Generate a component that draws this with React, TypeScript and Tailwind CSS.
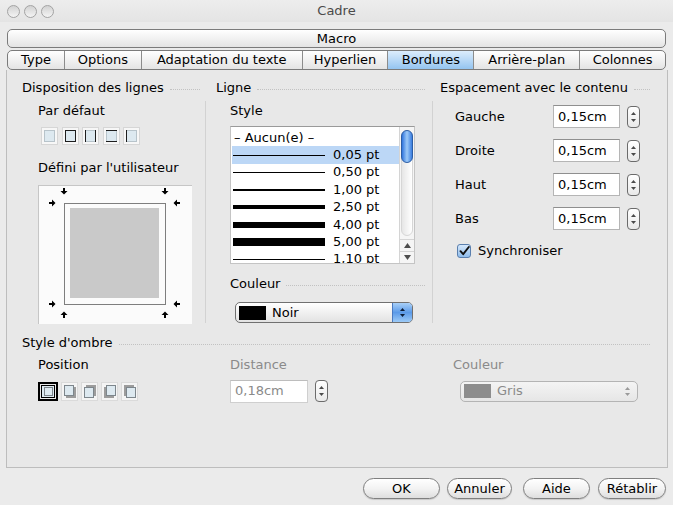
import React from "react";

const sans = "font-['DejaVu_Sans',sans-serif]";

const tabs: [string, number][] = [
  ["Type", 57],
  ["Options", 77],
  ["Adaptation du texte", 161],
  ["Hyperlien", 86],
  ["Bordures", 86],
  ["Arrière-plan", 106],
  ["Colonnes", 86],
];

const styleRows = [
  { label: "0,05 pt", h: 1, selected: true },
  { label: "0,50 pt", h: 1 },
  { label: "1,00 pt", h: 2 },
  { label: "2,50 pt", h: 4 },
  { label: "4,00 pt", h: 6 },
  { label: "5,00 pt", h: 8 },
  { label: "1,10 pt", h: 1 },
];

function GroupTitle({ label, disabled }: { label: string; disabled?: boolean }) {
  return (
    <div className="flex items-center h-4">
      <span className={`shrink-0 ${disabled ? "text-[#8a8a8a]" : ""}`}>{label}</span>
      <div className="ml-[6px] flex-1 mt-[2px] border-t border-dotted border-[#c2c2c2]" />
    </div>
  );
}

function Spinner({ disabled }: { disabled?: boolean }) {
  const c = disabled ? "#9a9a9a" : "#4a4a4a";
  return (
    <div
      className={`w-[13px] h-[22px] rounded-[4px] border ${
        disabled ? "border-[#9f9f9f]" : "border-[#6b6b6b]"
      } bg-linear-to-b from-white to-[#e9e9e9] flex flex-col items-center justify-center gap-[4px]`}
    >
      <svg width="5" height="3" viewBox="0 0 5 3">
        <path d="M2.5 0L5 3H0z" fill={c} />
      </svg>
      <svg width="5" height="3" viewBox="0 0 5 3">
        <path d="M0 0H5L2.5 3z" fill={c} />
      </svg>
    </div>
  );
}

function NumField({ value, disabled }: { value: string; disabled?: boolean }) {
  return (
    <div
      className={`h-[23px] flex items-center pl-[4px] bg-white border border-[#b5b5b5] border-t-[#8f8f8f] ${
        disabled ? "text-[#8a8a8a] bg-[#f7f7f7] border-[#cfcfcf] border-t-[#bdbdbd]" : ""
      }`}
    >
      {value}
    </div>
  );
}

function PresetIcon({ sides }: { sides: string }) {
  return (
    <svg width="17" height="18" viewBox="0 0 17 18">
      <rect x="0.5" y="0.5" width="16" height="17" fill="#f7f7f7" stroke="#d6d6d6" />
      <rect x="3.5" y="3.5" width="10" height="11" fill="#dde9f0" stroke="#b7c3ca" />
      {sides.includes("t") && <line x1="3" y1="3.5" x2="14" y2="3.5" stroke="#1e1e1e" />}
      {sides.includes("b") && <line x1="3" y1="14.5" x2="14" y2="14.5" stroke="#1e1e1e" />}
      {sides.includes("l") && <line x1="3.5" y1="3" x2="3.5" y2="15" stroke="#1e1e1e" />}
      {sides.includes("r") && <line x1="13.5" y1="3" x2="13.5" y2="15" stroke="#1e1e1e" />}
    </svg>
  );
}

function ShadowIcon({ dx, dy }: { dx: number; dy: number }) {
  const x = 4 - (dx < 0 ? dx : 0);
  const y = 4 - (dy < 0 ? dy : 0);
  return (
    <svg width="17" height="19" viewBox="0 0 17 19">
      <rect x="0.5" y="0.5" width="16" height="18" fill="#f4f4f4" stroke="#dadada" />
      <rect x={x + dx - 1} y={y + dy - 1} width="10" height="11" fill="#9c9c9c" />
      <rect x={x - 1 + 0.5} y={y - 1 + 0.5} width="9" height="10" fill="#dde9f0" stroke="#7d868c" />
    </svg>
  );
}

function Arrow({ x, y, rot }: { x: number; y: number; rot: number }) {
  return (
    <polygon
      points="-1,-4 1,-4 1,-1 3.5,-1 0,2.5 -3.5,-1 -1,-1"
      fill="#000"
      transform={`translate(${x} ${y}) rotate(${rot})`}
    />
  );
}

function BorderPreview() {
  return (
    <div className="w-[154px] h-[139px] bg-[#fbfbfb] border-t border-l border-[#c6c6c6]">
      <svg width="153" height="138" viewBox="0 0 153 138">
        <rect x="31" y="22" width="89" height="90" fill="#c9c9c9" />
        <rect
          x="25.5"
          y="17.5"
          width="101"
          height="101"
          fill="none"
          stroke="#000"
          strokeDasharray="1 1"
        />
        <Arrow x={25} y={6} rot={0} />
        <Arrow x={126} y={6} rot={0} />
        <Arrow x={14} y={17} rot={-90} />
        <Arrow x={14} y={118} rot={-90} />
        <Arrow x={137} y={17} rot={90} />
        <Arrow x={137} y={118} rot={90} />
        <Arrow x={25} y={128} rot={180} />
        <Arrow x={126} y={128} rot={180} />
      </svg>
    </div>
  );
}

function StyleList() {
  return (
    <div className="w-[185px] h-[138px] bg-white border border-[#c4c4c4] border-t-[#9a9a9a] flex overflow-hidden">
      <div className="flex-1 pt-[2px] pl-px">
        <div className="h-[17.4px] flex items-center pl-[2px]">– Aucun(e) –</div>
        {styleRows.map((r) => (
          <div
            key={r.label}
            className={`h-[17.4px] flex items-center ${r.selected ? "bg-[#bcd7f6]" : ""}`}
          >
            <div className="ml-[1px] w-[92px] bg-black" style={{ height: r.h }} />
            <span className="ml-[8px]">{r.label}</span>
          </div>
        ))}
      </div>
      <div className="w-[15px] border-l border-[#d4d4d4] bg-[#f5f5f5] flex flex-col items-center">
        <div className="mt-[3px] w-[12px] h-[106px] rounded-full border border-[#d6d6d6] bg-linear-to-r from-[#e6e6e6] to-white">
          <div className="-m-px w-[12px] h-[33px] rounded-full border border-[#2c5ea6] bg-linear-to-r from-[#2f74dc] via-[#9cc9f7] to-[#3a7ddf]" />
        </div>
        <div className="mt-[3px] w-full border-t border-[#d4d4d4] h-[12px] flex items-center justify-center">
          <svg width="7" height="5" viewBox="0 0 7 5">
            <path d="M3.5 0L7 5H0z" fill="#4d4d4d" />
          </svg>
        </div>
        <div className="w-full border-t border-[#d4d4d4] h-[12px] flex items-center justify-center">
          <svg width="7" height="5" viewBox="0 0 7 5">
            <path d="M0 0H7L3.5 5z" fill="#4d4d4d" />
          </svg>
        </div>
      </div>
    </div>
  );
}

function ColorSelect({
  swatch,
  label,
  disabled,
}: {
  swatch: string;
  label: string;
  disabled?: boolean;
}) {
  return (
    <div
      className={`w-[178px] h-[21px] rounded-[5px] border flex items-center overflow-hidden ${
        disabled
          ? "border-[#b4b4b4] bg-linear-to-b from-[#f4f4f4] to-[#e6e6e6] text-[#8a8a8a]"
          : "border-[#707070] bg-linear-to-b from-white to-[#e2e2e2]"
      }`}
    >
      <div className="ml-[3px] w-[27px] h-[14px]" style={{ background: swatch }} />
      <span className="ml-[6px] flex-1">{label}</span>
      <div
        className={`w-[20px] h-full flex flex-col items-center justify-center gap-[3px] ${
          disabled ? "" : "border-l border-[#4a79c0] bg-linear-to-b from-[#a9d0f8] via-[#5b9ae8] to-[#9ccaf7]"
        }`}
      >
        <svg width="5" height="3" viewBox="0 0 5 3">
          <path d="M2.5 0L5 3H0z" fill={disabled ? "#9a9a9a" : "#0d1f3a"} />
        </svg>
        <svg width="5" height="3" viewBox="0 0 5 3">
          <path d="M0 0H5L2.5 3z" fill={disabled ? "#9a9a9a" : "#0d1f3a"} />
        </svg>
      </div>
    </div>
  );
}

function Button({ label, w }: { label: string; w: string }) {
  return (
    <div
      className={`${w} h-[21px] rounded-full border border-[#7f7f7f] bg-linear-to-b from-white via-[#f3f3f3] to-[#dedede] shadow-[0_1px_1px_rgba(0,0,0,0.15)] flex items-center justify-center`}
    >
      {label}
    </div>
  );
}

export default function App() {
  return (
    <div
      className={`w-[673px] h-[505px] bg-[#ebebeb] ${sans} text-[13px] leading-4 text-black flex flex-col overflow-hidden`}
    >
      {/* Title bar */}
      <div className="h-[22px] grid grid-cols-[1fr_auto_1fr] items-center bg-linear-to-b from-[#ededed] to-[#e4e4e4]">
        <div className="flex gap-[4px] ml-[7px]">
          {[0, 1, 2].map((i) => (
            <div
              key={i}
              className="w-[13px] h-[13px] rounded-full border border-[#a3a3a3] bg-linear-to-b from-[#d2d2d2] to-[#f4f4f4]"
            />
          ))}
        </div>
        <span className="text-[#4a4a4a]">Cadre</span>
        <div />
      </div>

      {/* Macro + tabs */}
      <div className="px-[7px] pt-[7px]">
        <div className="h-[19px] rounded-[5px] border border-[#7b7b7b] bg-linear-to-b from-white to-[#e4e4e4] flex items-center justify-center">
          Macro
        </div>
        <div className="mt-[2px] h-[20px] rounded-[5px] border border-[#7b7b7b] bg-linear-to-b from-white to-[#e4e4e4] flex overflow-hidden">
          {tabs.map(([t, w], i) => (
            <div
              key={t}
              style={{ width: i === 0 ? w - 1 : w }}
              className={`h-full flex items-center justify-center ${
                i > 0 ? "border-l border-[#8c8c8c]" : ""
              } ${t === "Bordures" ? "bg-linear-to-b from-[#dcedfc] to-[#94c4f0]" : ""}`}
            >
              {t}
            </div>
          ))}
        </div>
      </div>

      {/* Panel */}
      <div className="ml-[6px] w-[662px] h-[398px] bg-[#e8e8e8] border-x border-b border-[#bdbdbd] pt-[10px] pl-[15px] pr-[17px]">
        <div className="flex h-[243px]">
          {/* Disposition des lignes */}
          <div className="w-[183px] pr-[5px]">
            <GroupTitle label="Disposition des lignes" />
            <div className="ml-[16px] mt-[7px]">Par défaut</div>
            <div className="ml-[19px] mt-[8px] flex gap-[3.5px]">
              <PresetIcon sides="" />
              <PresetIcon sides="tblr" />
              <PresetIcon sides="lr" />
              <PresetIcon sides="tb" />
              <PresetIcon sides="l" />
            </div>
            <div className="ml-[16px] mt-[15px]">Défini par l'utilisateur</div>
            <div className="ml-[16px] mt-[9px]">
              <BorderPreview />
            </div>
          </div>

          <div className="w-px bg-[#d2d2d2] mt-[21px]" />

          {/* Ligne */}
          <div className="w-[226px] pl-[10px] pr-[7px]">
            <GroupTitle label="Ligne" />
            <div className="ml-[14px] mt-[7px]">Style</div>
            <div className="ml-[14px] mt-[7px]">
              <StyleList />
            </div>
            <div className="ml-[14px] mt-[12px]">
              <GroupTitle label="Couleur" />
            </div>
            <div className="ml-[19px] mt-[10px]">
              <ColorSelect swatch="#000" label="Noir" />
            </div>
          </div>

          <div className="w-px bg-[#d2d2d2] mt-[21px]" />

          {/* Espacement */}
          <div className="flex-1 pl-[7px]">
            <GroupTitle label="Espacement avec le contenu" />
            {["Gauche", "Droite", "Haut", "Bas"].map((l, i) => (
              <div
                key={l}
                className={`ml-[15px] flex items-center ${i === 0 ? "mt-[9px]" : "mt-[11px]"}`}
              >
                <span className="w-[98px]">{l}</span>
                <div className="w-[67px]">
                  <NumField value="0,15cm" />
                </div>
                <div className="ml-[7px]">
                  <Spinner />
                </div>
              </div>
            ))}
            <div className="ml-[17px] mt-[13px] flex items-center">
              <div className="w-[14px] h-[14px] rounded-[3px] border border-[#5a7fae] bg-linear-to-b from-[#d6e8fb] to-[#8fbdec] flex items-center justify-center">
                <svg width="11" height="10" viewBox="0 0 11 10">
                  <path
                    d="M1.5 5.2L4.2 8.2L9.8 1"
                    fill="none"
                    stroke="#111"
                    strokeWidth="1.9"
                    strokeLinecap="round"
                    strokeLinejoin="round"
                  />
                </svg>
              </div>
              <span className="ml-[7px]">Synchroniser</span>
            </div>
          </div>
        </div>

        {/* Style d'ombre */}
        <div className="mt-[12px]">
          <GroupTitle label="Style d'ombre" />
        </div>
        <div className="mt-[6px] ml-[16px] flex">
          <span className="w-[192px]">Position</span>
          <span className="w-[223px] text-[#8a8a8a]">Distance</span>
          <span className="text-[#8a8a8a]">Couleur</span>
        </div>
        <div className="mt-[6px] ml-[16px] flex items-center h-[24px]">
          <div className="w-[192px] flex items-center gap-[3px]">
            <div className="w-[20px] h-[19px] border-2 border-black p-px flex">
              <div className="flex-1 border border-black bg-[#dde9f0] flex items-center justify-center">
                <div className="w-[9px] h-[9px] border border-[#7d868c] bg-[#dde9f0]" />
              </div>
            </div>
            <ShadowIcon dx={2} dy={2} />
            <ShadowIcon dx={2} dy={-2} />
            <ShadowIcon dx={-2} dy={2} />
            <ShadowIcon dx={-2} dy={-2} />
          </div>
          <div className="w-[78px]">
            <NumField value="0,18cm" disabled />
          </div>
          <div className="ml-[7px] w-[138px]">
            <Spinner />
          </div>
          <div className="ml-[7px]">
            <ColorSelect swatch="#8d8d8d" label="Gris" disabled />
          </div>
        </div>
      </div>

      {/* Buttons */}
      <div className="mt-[10px] pr-[7px] flex justify-end">
        <Button label="OK" w="w-[77px]" />
        <div className="ml-[7px]">
          <Button label="Annuler" w="w-[65px]" />
        </div>
        <div className="ml-[11px]">
          <Button label="Aide" w="w-[67px]" />
        </div>
        <div className="ml-[8px]">
          <Button label="Rétablir" w="w-[68px]" />
        </div>
      </div>
    </div>
  );
}
